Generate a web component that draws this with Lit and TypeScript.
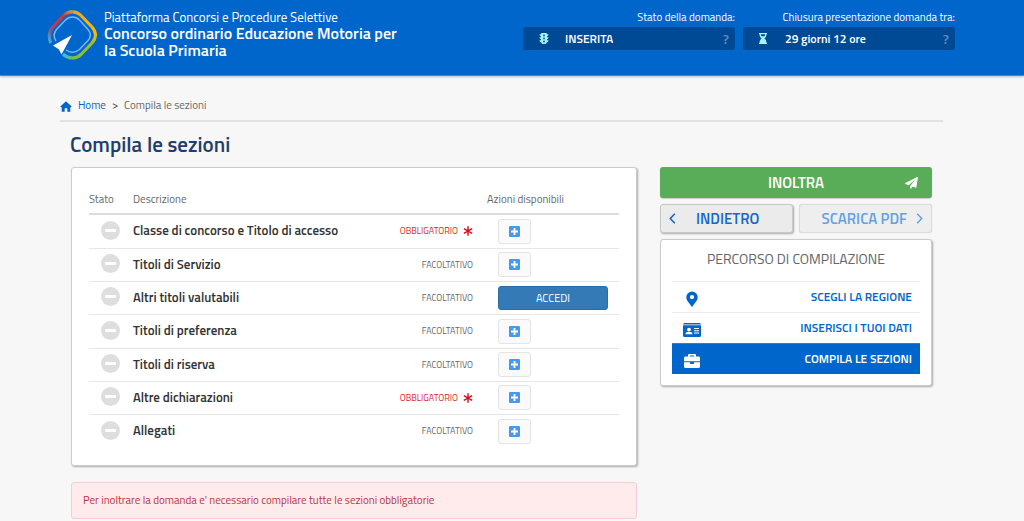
import { LitElement, html, css, svg } from "lit";
import { customElement } from "lit/decorators.js";
import { classMap } from "lit/directives/class-map.js";

interface Section {
  name: string;
  required?: boolean;
  open?: boolean;
}

const SECTIONS: Section[] = [
  { name: "Classe di concorso e Titolo di accesso", required: true },
  { name: "Titoli di Servizio" },
  { name: "Altri titoli valutabili", open: true },
  { name: "Titoli di preferenza" },
  { name: "Titoli di riserva" },
  { name: "Altre dichiarazioni", required: true },
  { name: "Allegati" },
];

const pin = svg`<svg width="12" height="16" viewBox="0 0 12 16" aria-hidden="true"><path fill="currentColor" fill-rule="evenodd" d="M6 .5a5.7 5.7 0 0 1 5.7 5.7C11.700 8.600 10.900 9.400 6.600 15.300a.7.7 0 0 1-1.200 0C1.100 9.400.3 8.600.3 6.200A5.700 5.700 0 0 1 6 .5Zm0 3.600a2.100 2.100 0 1 0 0 4.200 2.100 2.100 0 0 0 0-4.200Z"/></svg>`;
const card = svg`<svg width="18" height="14" viewBox="0 0 18 14" aria-hidden="true"><path fill="currentColor" d="M1.500 0h15A1.500 1.500 0 0 1 18 1.500H0A1.500 1.500 0 0 1 1.500 0ZM0 2.300h18v10.200a1.500 1.500 0 0 1-1.500 1.500h-15A1.500 1.500 0 0 1 0 12.500Z"/><path fill="#fff" d="M6 4.700a1.900 1.900 0 1 1 0 3.800 1.900 1.900 0 0 1 0-3.800ZM2.500 11.300c0-1.500.8-2.300 2-2.300h3c1.200 0 2 .8 2 2.300ZM11 5h5v1h-5Zm0 2.200h5v1h-5Zm0 2.200h5v1h-5Z"/></svg>`;
const briefcase = svg`<svg width="16" height="14" viewBox="0 0 16 14" aria-hidden="true"><path fill="currentColor" fill-rule="evenodd" d="M4 2.500V1.300C4 .5 4.600 0 5.300 0h5.400c.7 0 1.300.5 1.300 1.300v1.200h2.500c.8 0 1.500.7 1.500 1.500v3.300H0V4c0-.8.7-1.500 1.500-1.500Zm1.800 0h4.400v-.9H5.800ZM0 8.300h6v1.200c0 .3.200.5.500.5h3c.3 0 .5-.2.500-.5V8.300h6v4.200c0 .8-.7 1.500-1.500 1.500h-13A1.500 1.500 0 0 1 0 12.500Z"/></svg>`;

const STEPS = [
  { label: "SCEGLI LA REGIONE", icon: pin },
  { label: "INSERISCI I TUOI DATI", icon: card },
  { label: "COMPILA LE SEZIONI", icon: briefcase, current: true },
];

const logo = svg`<svg class="logo" width="50" height="52" viewBox="0 0 50 52" aria-hidden="true">
  <defs>
    <linearGradient id="red" gradientUnits="userSpaceOnUse" x1="3" y1="35" x2="25" y2="2">
      <stop offset="0" stop-color="#35b9e6"/><stop offset=".3" stop-color="#7a5a8c"/><stop offset=".5" stop-color="#c63743"/><stop offset=".8" stop-color="#c83a3c"/><stop offset="1" stop-color="#f09a1c"/>
    </linearGradient>
    <linearGradient id="gold" gradientUnits="userSpaceOnUse" x1="30" y1="2" x2="30" y2="50">
      <stop offset="0" stop-color="#f2a51a"/><stop offset=".45" stop-color="#fbbb00"/><stop offset=".65" stop-color="#a9bd28"/><stop offset="1" stop-color="#82bd2c"/>
    </linearGradient>
    <linearGradient id="aqua" gradientUnits="userSpaceOnUse" x1="16" y1="46" x2="29" y2="50">
      <stop offset="0" stop-color="#31bfe0"/><stop offset="1" stop-color="#82bd2c"/>
    </linearGradient>
  </defs>
  <g fill="none" stroke-width="3.200">
    <path stroke="url(#red)" d="M4 34C1.500 30 1.500 23 5.500 18.500L16 7C18.500 4.200 22 2.800 25.500 2.800"/>
    <path stroke="url(#gold)" d="M25.500 2.800C29 2.800 32 4.200 34.500 7L45 18C49.500 23 49.500 29 45 34L34.500 45C32 47.500 29 49 25.500 49"/>
    <path stroke="url(#aqua)" d="M26 49C22 49 19 48 16 45"/>
    <path stroke="#77b5f5" stroke-width="1.500" d="M9 32C6.500 28 6.500 24 9.500 20.500L18.500 11C22.500 7 28.500 7 32.500 11L41 20.500C44 24 44 28 41 31.500L32.500 40.500C28.500 44 23 44 19 41"/>
  </g>
  <path fill="#fff" d="M25 26 14.500 45.500 12 40.500 6 36.500Z"/>
</svg>`;

@customElement("app-root")
export class AppRoot extends LitElement {
  static styles = css`
    :host {
      display: block;
      min-height: 100vh;
      background: #f7f7f7;
      color: #333;
      font-family: "Titillium Web", Roboto, "Liberation Sans", sans-serif;
      font-size: 12px;
      line-height: 16px;
    }
    * { box-sizing: border-box; }
    h1, h2, p, ol, ul, dl, dd { margin: 0; padding: 0; list-style: none; }
    button { font: inherit; margin: 0; padding: 0; cursor: pointer; }
    a { color: #06c; text-decoration: none; }
    svg { display: block; flex: none; }

    .top {
      display: flex;
      justify-content: space-between;
      align-items: flex-start;
      height: 76px;
      padding: 9px 69px 0 47px;
      background: #06c;
      border-bottom: 1px solid #4a87c8;
      box-shadow: 0 1px 2px #bbb;
      color: #fff;
    }
    .brand { display: flex; gap: 7px; }
    .platform { font-size: 13px; }
    .contest { max-width: 300px; font-size: 16px; line-height: 17px; font-weight: 600; }
    .status { display: grid; grid-template-columns: 212px 212px; gap: 8px; }
    .label { font-size: 11px; text-align: right; }
    .pill {
      display: flex;
      align-items: center;
      height: 23px;
      margin-top: 2px;
      padding: 0 6px 0 16px;
      border-radius: 3px;
      background: #004a95;
      font-weight: 600;
    }
    .pill-icon { width: 26px; color: #a5f3ff; }
    .help { margin-left: auto; border: 0; background: none; color: #5c8bbf; font-size: 14px; font-weight: 600; }

    .page { padding: 21px 81px 2px 60px; }
    .crumbs ol { display: flex; align-items: center; gap: 6px; }
    .crumbs li { display: flex; align-items: center; gap: 6px; }
    .crumbs {
      padding-bottom: 7px;
      border-bottom: 2px solid #e2e2e2;
      color: #666;
    }
    .crumbs, th, .alert { font-size: 11px; }
    .crumbs svg { color: #06c; margin-top: 3px; }
    .sep { color: #333; }

    .title {
      margin: 8px 0 9px 10px;
      color: #1f3e6b;
      font-size: 21px;
      line-height: 28px;
      font-weight: 600;
    }
    .columns {
      display: grid;
      grid-template-columns: minmax(0, 566fr) minmax(0, 272fr);
      gap: 23px;
      align-items: start;
      margin-left: 11px;
      padding-right: 11px;
    }
    .panel {
      border: 1px solid #ccc;
      border-radius: 3px;
      background: #fff;
      box-shadow: 1px 1px 2px #aaa;
    }
    .sections { padding: 16px 17px 17px; }
    table { width: 100%; border-collapse: collapse; table-layout: fixed; }
    th, td { padding: 0; text-align: left; }
    th { height: 30px; border-bottom: 2px solid #ddd; color: #666; font-weight: 400; }
    td { height: 33px; border-bottom: 1px solid #e6e6e6; }
    tr:nth-child(3n + 1) td { height: 34px; }
    tr:last-child td { border-bottom: 0; }
    .c-state { width: 44px; }
    .c-kind { width: 150px; }
    .c-action { width: 132px; }
    .state svg { margin: 0 0 2px 12px; }
    .name { padding-bottom: 2px; font-size: 13px; font-weight: 600; white-space: nowrap; }
    .kind { padding-right: 14px; text-align: right; color: #666; font-size: 9px; }
    .kind span { display: inline-flex; align-items: center; gap: 5px; }
    .kind .required { color: #d6232a; }
    .action { padding-left: 11px; }
    .plus {
      display: grid;
      place-items: center;
      width: 33px;
      height: 25px;
      border: 1px solid #e4e4e4;
      border-radius: 3px;
      background: #fafafa;
      color: #4a98ea;
    }
    .enter {
      display: block;
      width: 110px;
      height: 24px;
      border: 1px solid #2e6da4;
      border-radius: 3px;
      background: #337ab7;
      color: #fff;
      font-size: 11px;
    }
    .alert {
      margin-top: 16px;
      padding: 9px 11px;
      border: 1px solid #f3cfd3;
      border-radius: 3px;
      background: #ffebeb;
      color: #b9343b;
      line-height: 17px;
    }

    .side { display: grid; gap: 6px; }
    .send {
      display: grid;
      grid-template-columns: 1fr auto 1fr;
      align-items: center;
      height: 31px;
      padding: 0 14px;
      border: 0;
      border-radius: 3px;
      background: #59ad58;
      box-shadow: 0 1px 1px #ccc;
      color: #fff;
      font-size: 15px;
      font-weight: 600;
    }
    .send span { grid-column: 2; }
    .send svg { justify-self: end; }
    .pair { display: grid; grid-template-columns: 1fr 1fr; gap: 6px; }
    .nav {
      display: flex;
      align-items: center;
      height: 29px;
      padding: 0 8px;
      border: 1px solid #c8c8c8;
      border-radius: 3px;
      background: #ebebeb;
      box-shadow: 1px 1px 2px #aaa;
      color: #1467cc;
      font-size: 15px;
      font-weight: 600;
    }
    .back { gap: 20px; }
    .pdf, .pdf:disabled {
      justify-content: flex-end;
      gap: 9px;
      border-color: #ddd;
      background: #eee;
      box-shadow: 0 0 1px #ccc;
      color: #64a2e3;
      cursor: default;
    }
    .path { padding: 8px 11px 11px; }
    .path h2 {
      padding-bottom: 12px;
      color: #666;
      font-size: 14px;
      line-height: 21px;
      font-weight: 400;
      text-align: center;
    }
    .step {
      display: flex;
      align-items: center;
      justify-content: space-between;
      height: 31px;
      padding: 0 8px 0 10px;
      border-top: 1px solid #ececec;
      font-size: 12px;
      font-weight: 600;
    }
    .step-icon { display: grid; width: 20px; place-items: center; padding-top: 3px; }
    .current { border-top-color: #2c7cd2; background: #06c; color: #fff; }
  `;

  private renderRow(s: Section) {
    return html`<tr>
      <td class="state">
        <svg width="19" height="19" viewBox="0 0 19 19" role="img" aria-label="Da compilare">
          <circle cx="9.500" cy="9.500" r="9.500" fill="#dedede" />
          <rect x="4" y="8" width="11" height="3" rx="1" fill="#fff" />
        </svg>
      </td>
      <td class="name">${s.name}</td>
      <td class="kind">
        ${s.required
          ? html`<span class="required">OBBLIGATORIO
              <svg width="10" height="10" viewBox="0 0 10 10" aria-hidden="true">
                <path d="M5 .3v9.400M.9 2.700l8.200 4.600M.9 7.300l8.200-4.600" stroke="#dc0a14" stroke-width="1.400" />
              </svg></span>`
          : html`<span>FACOLTATIVO</span>`}
      </td>
      <td class="action">
        ${s.open
          ? html`<button class="enter">ACCEDI</button>`
          : html`<button class="plus" aria-label="Apri ${s.name}">
              <svg width="11" height="11" viewBox="0 0 11 11" aria-hidden="true">
                <rect width="11" height="11" rx="1" fill="currentColor" />
                <path d="M5.500 2v7M2 5.500h7" stroke="#fff" stroke-width="1.800" />
              </svg>
            </button>`}
      </td>
    </tr>`;
  }

  render() {
    return html`
      <header class="top">
        <div class="brand">
          ${logo}
          <div>
            <p class="platform">Piattaforma Concorsi e Procedure Selettive</p>
            <p class="contest">Concorso ordinario Educazione Motoria per la Scuola Primaria</p>
          </div>
        </div>
        <div class="status">
          <div>
            <p class="label">Stato della domanda:</p>
            <div class="pill">
              <span class="pill-icon">
                <svg width="10" height="11" viewBox="0 0 10 11" aria-hidden="true">
                  <path fill="currentColor" d="M2 1.200C2 .5 2.500 0 3.200 0h3.600C7.500 0 8 .5 8 1.200h1.500c0 1-.6 1.700-1.500 2v1h1.500c0 1-.6 1.700-1.500 2v1h1.500c0 1-.6 1.700-1.500 2C7.800 10.300 6.700 11 5 11s-2.800-.7-3-1.800c-.9-.3-1.500-1-1.500-2H2v-1c-.9-.3-1.500-1-1.500-2H2v-1c-.9-.3-1.500-1-1.500-2Z" />
                  <g fill="#075a8e"><circle cx="5" cy="2.500" r=".9" /><circle cx="5" cy="5.500" r=".9" /><circle cx="5" cy="8.500" r=".9" /></g>
                </svg>
              </span>
              <span>INSERITA</span>
              <button class="help">?</button>
            </div>
          </div>
          <div>
            <p class="label">Chiusura presentazione domanda tra:</p>
            <div class="pill">
              <span class="pill-icon">
                <svg width="8" height="11" viewBox="0 0 8 11" aria-hidden="true">
                  <path fill="currentColor" fill-rule="evenodd" d="M0 0h8v1.300h-.6c0 2-.7 3.400-2 4.200 1.300.8 2 2.200 2 4.200H8V11H0V9.700h.6c0-2 .7-3.400 2-4.200-1.300-.8-2-2.200-2-4.200H0Zm1.900 1.300c0 .8.200 1.400.5 2h3.200c.3-.6.5-1.200.5-2Z" />
                </svg>
              </span>
              <span>29 giorni 12 ore</span>
              <button class="help">?</button>
            </div>
          </div>
        </div>
      </header>

      <main class="page">
        <nav class="crumbs" aria-label="Percorso">
          <ol>
            <li>
              <svg width="12" height="11" viewBox="0 0 12 11" aria-hidden="true">
                <path fill="currentColor" d="M6 .3 11.700 5.400 11 6.200h-.7V10.700H7.300V7.300H4.700v3.400H1.700V6.200H1L.3 5.400Z" />
              </svg>
              <a href="#home">Home</a>
              <span class="sep">&gt;</span>
            </li>
            <li aria-current="page">Compila le sezioni</li>
          </ol>
        </nav>
        <h1 class="title">Compila le sezioni</h1>
        <div class="columns">
          <div>
            <section class="panel sections">
              <table>
                <colgroup>
                  <col class="c-state" /><col /><col class="c-kind" /><col class="c-action" />
                </colgroup>
                <thead>
                  <tr>
                    <th scope="col">Stato</th>
                    <th scope="col" colspan="2">Descrizione</th>
                    <th scope="col">Azioni disponibili</th>
                  </tr>
                </thead>
                <tbody>${SECTIONS.map((s) => this.renderRow(s))}</tbody>
              </table>
            </section>
            <p class="alert" role="alert">
              Per inoltrare la domanda e' necessario compilare tutte le sezioni obbligatorie
            </p>
          </div>
          <aside class="side">
            <button class="send">
              <span>INOLTRA</span>
              <svg width="13" height="12" viewBox="0 0 13 12" aria-hidden="true">
                <path fill="currentColor" d="M12.200.1c.4-.2.800.1.700.6l-1.600 9.700c-.1.400-.4.500-.7.400L7.700 9.500 6.100 11.600c-.3.400-.9.200-.9-.3V8.900l5-6.300-6.500 5.700L.4 7C-.1 6.800-.1 6.300.3 6.100Z" />
              </svg>
            </button>
            <div class="pair">
              <button class="nav back">
                <svg width="7" height="11" viewBox="0 0 7 11" aria-hidden="true">
                  <path d="M5.800.8 1.300 5.500l4.500 4.700" fill="none" stroke="currentColor" stroke-width="1.600" />
                </svg>
                INDIETRO
              </button>
              <button class="nav pdf" disabled>
                SCARICA PDF
                <svg width="7" height="11" viewBox="0 0 7 11" aria-hidden="true">
                  <path d="M1.200.8l4.500 4.700-4.500 4.700" fill="none" stroke="currentColor" stroke-width="1.500" />
                </svg>
              </button>
            </div>
            <nav class="panel path" aria-labelledby="path-title">
              <h2 id="path-title">PERCORSO DI COMPILAZIONE</h2>
              <ul>
                ${STEPS.map(
                  (s) => html`<li>
                    <a href="#" class=${classMap({ step: true, current: !!s.current })}>
                      <span class="step-icon">${s.icon}</span>${s.label}
                    </a>
                  </li>`
                )}
              </ul>
            </nav>
          </aside>
        </div>
      </main>
    `;
  }
}
